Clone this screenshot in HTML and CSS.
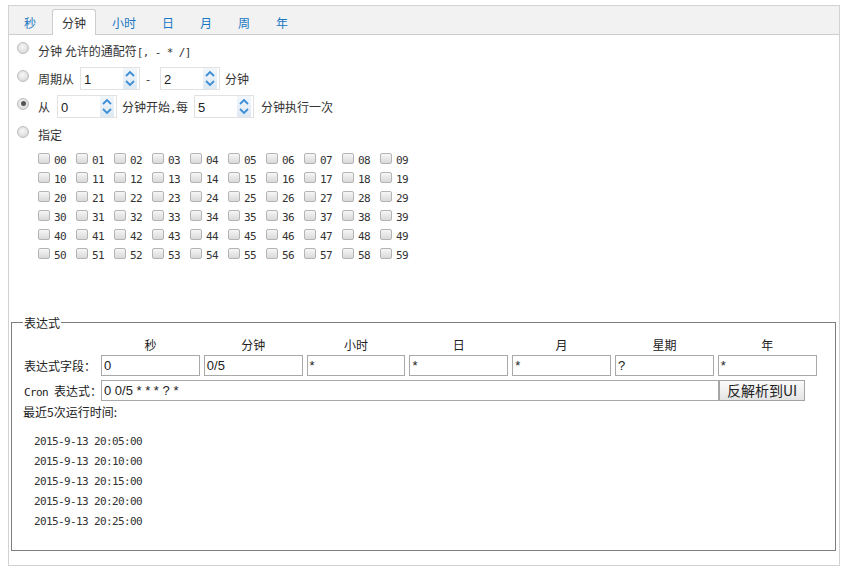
FILE: index.html
```html
<!DOCTYPE html>
<html lang="zh-CN">
<head>
<meta charset="utf-8">
<title>Cron</title>
<link rel="stylesheet" href="styles.css">
</head>
<body>
<div class="panel">
  <ul class="tabs">
    <li class="tab">秒</li>
    <li class="tab active">分钟</li>
    <li class="tab">小时</li>
    <li class="tab">日</li>
    <li class="tab">月</li>
    <li class="tab">周</li>
    <li class="tab">年</li>
  </ul>
  <div class="content">
    <div class="opt"><span class="radio"></span><span>分钟 允许的通配符<span class="mono">[, - * /]</span></span></div>
    <div class="opt">
      <span class="radio"></span><span>周期从</span>
      <span class="spin s-a"><span class="val">1</span><svg viewBox="0 0 14 21"><polyline points="3,8 7,4 11,8"/><polyline points="3,13 7,17 11,13"/></svg></span>
      <span class="dash">-</span>
      <span class="spin s-b"><span class="val">2</span><svg viewBox="0 0 14 21"><polyline points="3,8 7,4 11,8"/><polyline points="3,13 7,17 11,13"/></svg></span>
      <span>分钟</span>
    </div>
    <div class="opt">
      <span class="radio checked"></span><span>从</span>
      <span class="spin s-c"><span class="val">0</span><svg viewBox="0 0 14 21"><polyline points="3,8 7,4 11,8"/><polyline points="3,13 7,17 11,13"/></svg></span>
      <span>分钟开始<span class="mono">,</span>每</span>
      <span class="spin s-d"><span class="val">5</span><svg viewBox="0 0 14 21"><polyline points="3,8 7,4 11,8"/><polyline points="3,13 7,17 11,13"/></svg></span>
      <span>分钟执行一次</span>
    </div>
    <div class="opt"><span class="radio"></span><span>指定</span></div>
    <div class="grid">
      <label class="cb"><i></i>00</label><label class="cb"><i></i>01</label><label class="cb"><i></i>02</label><label class="cb"><i></i>03</label><label class="cb"><i></i>04</label><label class="cb"><i></i>05</label><label class="cb"><i></i>06</label><label class="cb"><i></i>07</label><label class="cb"><i></i>08</label><label class="cb"><i></i>09</label>
      <label class="cb"><i></i>10</label><label class="cb"><i></i>11</label><label class="cb"><i></i>12</label><label class="cb"><i></i>13</label><label class="cb"><i></i>14</label><label class="cb"><i></i>15</label><label class="cb"><i></i>16</label><label class="cb"><i></i>17</label><label class="cb"><i></i>18</label><label class="cb"><i></i>19</label>
      <label class="cb"><i></i>20</label><label class="cb"><i></i>21</label><label class="cb"><i></i>22</label><label class="cb"><i></i>23</label><label class="cb"><i></i>24</label><label class="cb"><i></i>25</label><label class="cb"><i></i>26</label><label class="cb"><i></i>27</label><label class="cb"><i></i>28</label><label class="cb"><i></i>29</label>
      <label class="cb"><i></i>30</label><label class="cb"><i></i>31</label><label class="cb"><i></i>32</label><label class="cb"><i></i>33</label><label class="cb"><i></i>34</label><label class="cb"><i></i>35</label><label class="cb"><i></i>36</label><label class="cb"><i></i>37</label><label class="cb"><i></i>38</label><label class="cb"><i></i>39</label>
      <label class="cb"><i></i>40</label><label class="cb"><i></i>41</label><label class="cb"><i></i>42</label><label class="cb"><i></i>43</label><label class="cb"><i></i>44</label><label class="cb"><i></i>45</label><label class="cb"><i></i>46</label><label class="cb"><i></i>47</label><label class="cb"><i></i>48</label><label class="cb"><i></i>49</label>
      <label class="cb"><i></i>50</label><label class="cb"><i></i>51</label><label class="cb"><i></i>52</label><label class="cb"><i></i>53</label><label class="cb"><i></i>54</label><label class="cb"><i></i>55</label><label class="cb"><i></i>56</label><label class="cb"><i></i>57</label><label class="cb"><i></i>58</label><label class="cb"><i></i>59</label>
    </div>
    <fieldset class="expr">
      <legend>表达式</legend>
      <div class="fields">
        <span></span><span class="hd">秒</span><span class="hd">分钟</span><span class="hd">小时</span><span class="hd">日</span><span class="hd">月</span><span class="hd">星期</span><span class="hd">年</span>
        <span class="lbl">表达式字段：</span>
        <span class="box">0</span><span class="box">0/5</span><span class="box">*</span><span class="box">*</span><span class="box">*</span><span class="box">?</span><span class="box">*</span>
      </div>
      <div class="cron">
        <span class="lbl"><span class="mono">Cron </span>表达式：</span>
        <span class="box wide">0 0/5 * * * ? *</span>
        <span class="btn">反解析到UI</span>
      </div>
      <div class="recent">最近5次运行时间:</div>
      <ul class="times">
        <li>2015-9-13 20:05:00</li>
        <li>2015-9-13 20:10:00</li>
        <li>2015-9-13 20:15:00</li>
        <li>2015-9-13 20:20:00</li>
        <li>2015-9-13 20:25:00</li>
      </ul>
    </fieldset>
  </div>
</div>
</body>
</html>
```
FILE: styles.css
```css
* { box-sizing: border-box; }
body {
  margin: 0;
  font-family: "Noto Sans CJK SC", "Noto Sans", sans-serif;
  font-size: 12px;
  color: #333;
  background: #fff;
}
.panel {
  margin: 5px 0 0 8px;
  width: 832px;
  border: 1px solid #d2d2d2;
}
.tabs {
  list-style: none;
  margin: 0;
  display: flex;
  align-items: flex-end;
  gap: 6px;
  height: 29px;
  padding: 0 0 0 5px;
  background: #f2f2f2;
  border-bottom: 1px solid #cdcdcd;
}
.tab {
  height: 25px;
  line-height: 25px;
  padding: 0 10px;
  color: #1a78c2;
  margin-bottom: -1px;
}
.tab.active {
  height: 26px;
  padding: 0 9px;
  background: #fff;
  color: #333;
  border: 1px solid #cdcdcd;
  border-bottom: none;
  border-radius: 3px 3px 0 0;
}
.content { padding-top: 1px; }
.opt {
  display: flex;
  align-items: center;
  height: 28px;
  padding-left: 8px;
  white-space: nowrap;
}
.radio {
  flex: none;
  width: 12px;
  height: 12px;
  border-radius: 50%;
  border: 1px solid #bcbcbc;
  background: radial-gradient(circle at 45% 40%, #f7f7f7 0%, #e2e2e2 55%, #cfcfcf 100%);
  margin: 0 9px 5px 0;
  position: relative;
}
.radio.checked::after {
  content: "";
  position: absolute;
  left: 2.5px;
  top: 2.5px;
  width: 5px;
  height: 5px;
  border-radius: 50%;
  background: #555;
}
.spin {
  display: flex;
  align-items: center;
  width: 60px;
  height: 23px;
  border: 1px solid #e2e2e2;
  background: #fff;
  font-family: "Liberation Sans", Arial, sans-serif;
  font-size: 13px;
  color: #222;
}
.spin .val { flex: 1; padding-left: 3px; padding-top: 2px; }
.spin svg {
  width: 14px;
  height: 21px;
  margin-right: 2px;
  background: linear-gradient(#f1f6fb, #dfe9f2);
  fill: none;
  stroke: #3d8ed6;
  stroke-width: 1.8;
}
.s-a { margin: 0 0 0 6px; }
.dash { width: 20px; padding-left: 6px; }
.s-b { margin-right: 5px; }
.s-c { margin: 0 5px 0 7px; }
.s-d { margin: 0 7px 0 6px; }
.mono {
  font-family: "DejaVu Sans Mono", monospace;
  font-size: 11px;
  letter-spacing: -0.62px;
}
.grid {
  display: grid;
  grid-template-columns: repeat(10, 38px);
  grid-auto-rows: 19px;
  margin: 3px 0 0 29px;
  width: 380px;
}
.cb {
  display: flex;
  align-items: center;
  font-family: "DejaVu Sans Mono", monospace;
  font-size: 11px;
  letter-spacing: -0.62px;
  color: #333;
}
.cb i {
  flex: none;
  width: 12px;
  height: 11px;
  border: 1px solid #b4b4b4;
  border-radius: 2px;
  background: linear-gradient(#f6f6f6, #d9d9d9);
  margin: 0 4px 5px 0;
}
.expr {
  margin: 50px 3px 14px 2px;
  border: 1px solid #7d7d7d;
  padding: 4px 17px 18px 11px;
  min-width: 0;
}
.expr legend {
  padding: 0 1px;
  line-height: 15px;
  color: #222;
}
.fields {
  display: grid;
  grid-template-columns: 74px repeat(7, 98.8px);
  column-gap: 4px;
  grid-template-rows: 20px 21px;
  row-gap: 1px;
  align-items: center;
}
.hd { text-align: center; color: #222; }
.lbl { color: #222; white-space: nowrap; padding-left: 1px; }
.box {
  height: 21px;
  border: 1px solid #a9a9a9;
  background: #fff;
  padding: 1px 0 0 2px;
  font-family: "Liberation Sans", Arial, sans-serif;
  font-size: 13px;
  line-height: 17px;
  color: #222;
  white-space: pre;
}
.cron {
  display: flex;
  align-items: center;
  margin-top: 4px;
  height: 21px;
}
.cron .lbl { width: 78px; flex: none; }
.box.wide { width: 618px; flex: none; }
.btn {
  width: 86px;
  height: 21px;
  border: 1px solid #a3a3a3;
  background: linear-gradient(#fbfbfb, #e4e4e4);
  font-size: 14px;
  line-height: 19px;
  text-align: center;
  color: #222;
}
.recent { height: 22px; line-height: 22px; color: #222; }
.times {
  list-style: none;
  margin: 9px 0 0;
  padding: 0 0 0 11px;
  font-family: "DejaVu Sans Mono", monospace;
  font-size: 11px;
  letter-spacing: -0.62px;
  color: #333;
}
.times li { height: 20px; line-height: 20px; }
```
